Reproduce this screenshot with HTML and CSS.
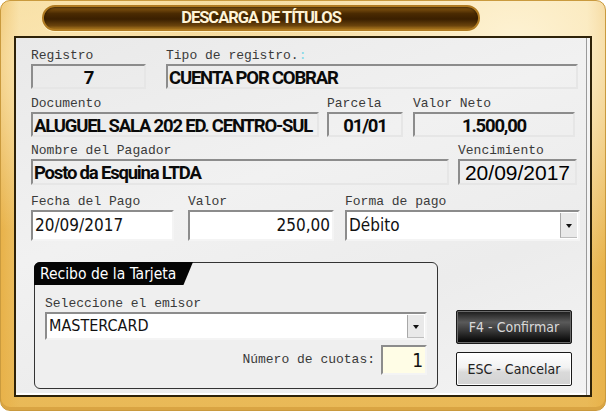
FILE: index.html
```html
<!doctype html>
<html>

<head>
	<meta charset="utf-8" />
	<link rel="stylesheet" href="styles.css">
</head>

<body>

	<div class="window">

		<div class="title-bar">
			<div class="title-pill">DESCARGA DE TÍTULOS</div>
		</div>

		<div class="panel">

			<div class="row row-1">
				<div class="field">
					<label>Registro</label>
					<div class="box bold center">7</div>
				</div>
				<div class="field">
					<label>Tipo de registro.<span class="colon">:</span></label>
					<div class="box bold">CUENTA POR COBRAR</div>
				</div>
			</div>

			<div class="row row-2">
				<div class="field">
					<label>Documento</label>
					<div class="box bold">ALUGUEL SALA 202 ED. CENTRO-SUL</div>
				</div>
				<div class="field">
					<label>Parcela</label>
					<div class="box bold center">01/01</div>
				</div>
				<div class="field">
					<label>Valor Neto</label>
					<div class="box bold center">1.500,00</div>
				</div>
			</div>

			<div class="row row-3">
				<div class="field">
					<label>Nombre del Pagador</label>
					<div class="box bold">Posto da Esquina LTDA</div>
				</div>
				<div class="field">
					<label>Vencimiento</label>
					<div class="box date center">20/09/2017</div>
				</div>
			</div>

			<div class="row row-4">
				<div class="field">
					<label>Fecha del Pago</label>
					<div class="input">20/09/2017</div>
				</div>
				<div class="field">
					<label>Valor</label>
					<div class="input right">250,00</div>
				</div>
				<div class="field">
					<label>Forma de pago</label>
					<div class="input select">
						<span>Débito</span>
						<span class="drop"></span>
					</div>
				</div>
			</div>

			<div class="bottom">

				<div class="group">
					<div class="group-tab">Recibo de la Tarjeta</div>
					<div class="group-body">
						<label>Seleccione el emisor</label>
						<div class="input select emisor">
							<span>MASTERCARD</span>
							<span class="drop"></span>
						</div>
						<div class="cuotas">
							<label>Número de cuotas:</label>
							<div class="input cuotas-input right">1</div>
						</div>
					</div>
				</div>

				<div class="buttons">
					<button class="btn btn-dark">F4 - Confirmar</button>
					<button class="btn btn-light">ESC - Cancelar</button>
				</div>

			</div>

		</div>

	</div>

</body>

</html>
```

FILE: styles.css
```css
* {
	box-sizing: border-box;
}

body {
	margin: 0;
	width: 606px;
	height: 411px;
	overflow: hidden;
	background: #ffffff;
}

.window {
	width: 606px;
	height: 411px;
	padding: 0 13px 13px 13px;
	border: 1px solid #c99a3e;
	border-radius: 10px;
	background:
		radial-gradient(ellipse at 85% 10%, rgba(255, 246, 220, 0.9), rgba(255, 246, 220, 0) 45%),
		radial-gradient(ellipse at 10% 15%, rgba(255, 240, 200, 0.7), rgba(255, 240, 200, 0) 35%),
		linear-gradient(90deg, #e8b24a, rgba(232, 178, 74, 0) 3%, rgba(232, 178, 74, 0) 97%, #e8b24a),
		linear-gradient(180deg, #f4d690, #eec46c 45%, #e9b957);
	box-shadow: inset 0 -3px 0 #d9a443;
	display: flex;
	flex-direction: column;
}

/* title */

.title-bar {
	height: 35px;
	padding: 4px 112px 0 28px;
}

.title-pill {
	height: 26px;
	border-radius: 13px;
	border: 2px solid #b07b22;
	background: linear-gradient(180deg, #8a5a12, #4a2a02 30%, #3a1f00 55%, #6a430c 85%, #a8741c);
	box-shadow: 0 1px 0 #fff2c8, inset 0 1px 2px rgba(0, 0, 0, 0.5);
	color: #fff3d6;
	font-family: Roboto, "Liberation Sans", sans-serif;
	font-weight: bold;
	font-size: 16.5px;
	letter-spacing: -1px;
	line-height: 22px;
	text-align: center;
}

/* panel */

.panel {
	flex: 1;
	border: 2px solid #2e2208;
	box-shadow: inset -3px 0 0 #f4f4f4, inset -4px 0 0 #9a9a9a, inset 0 -2px 0 #ffffff;
	background: linear-gradient(160deg, #e9e9e9, #f1f1f1 40%, #ececec 70%, #f3f3f3);
	padding: 11px 13px 0 15px;
}

label {
	display: block;
	font-family: "Liberation Mono", "Courier New", monospace;
	font-size: 13px;
	line-height: 14px;
	color: #3a3a3a;
	margin-bottom: 1px;
	white-space: nowrap;
}

.colon {
	color: #7fd8e8;
}

.row {
	display: grid;
}

.row-1 {
	grid-template-columns: 115px 412px;
	column-gap: 20px;
}

.row-2 {
	margin-top: 8px;
	grid-template-columns: 288px 76px 164px;
	column-gap: 8px;
}

.row-2 .field:last-child {
	margin-left: 2px;
}

.row-3 {
	margin-top: 7px;
	grid-template-columns: 418px 119px;
	column-gap: 9px;
}

.row-4 {
	margin-top: 10px;
	grid-template-columns: 143px 146px 232px;
	column-gap: 14px;
}

.row-4 .field:last-child {
	margin-left: -3px;
}

.box {
	height: 25px;
	border: 2px solid;
	border-color: #8c8c8c #e6e6e6 #e6e6e6 #8c8c8c;
	padding: 0 1px;
	color: #0a0a0a;
	white-space: nowrap;
	overflow: hidden;
}

.row-3 .box {
	height: 26px;
}

.bold {
	font-family: Roboto, "Liberation Sans", sans-serif;
	font-weight: bold;
	font-size: 18.5px;
	letter-spacing: -1.2px;
	line-height: 24px;
}

.date {
	font-family: "Liberation Sans", Arial, sans-serif;
	font-size: 21px;
	line-height: 23px;
	color: #000000;
}

.center {
	text-align: center;
}

.right {
	text-align: right;
}

.input {
	height: 31px;
	background: #ffffff;
	border: 2px solid;
	border-color: #8c8c8c #f4f4f4 #f4f4f4 #8c8c8c;
	padding: 0 2px;
	font-family: "DejaVu Sans Condensed", "DejaVu Sans", sans-serif;
	font-size: 17px;
	line-height: 27px;
	color: #111111;
	white-space: nowrap;
}

.select {
	display: flex;
	justify-content: space-between;
	padding-right: 0;
}

.drop {
	width: 17px;
	height: 25px;
	margin-top: 1px;
	margin-right: 1px;
	background: #e9e9e9;
	border-left: 1px solid #a8a8a8;
	border-bottom: 1px solid #bdbdbd;
	position: relative;
}

.drop::after {
	content: "";
	position: absolute;
	left: 5px;
	top: 11px;
	border-left: 3px solid transparent;
	border-right: 3px solid transparent;
	border-top: 4px solid #111111;
}

/* bottom area */

.bottom {
	margin-top: 21px;
	display: flex;
	align-items: flex-start;
}

.group {
	margin-left: 3px;
	width: 404px;
	height: 127px;
	border: 1px solid #333333;
	border-radius: 6px;
	background: #efefef;
}

.group-tab {
	width: 159px;
	height: 23px;
	margin: -1px 0 0 -1px;
	padding-left: 6px;
	background: #050505;
	color: #ffffff;
	border-top-left-radius: 6px;
	clip-path: polygon(0 0, 100% 0, 94% 100%, 0 100%);
	font-family: "DejaVu Sans Condensed", "DejaVu Sans", sans-serif;
	font-size: 15.5px;
	line-height: 24px;
}

.group-body {
	padding: 12px 10px 0 10px;
}

.emisor {
	height: 28px;
	font-size: 16px;
	line-height: 24px;
}

.emisor .drop {
	height: 23px;
	margin-top: 1px;
}

.emisor .drop::after {
	top: 10px;
}

.cuotas {
	margin-top: 5px;
	display: flex;
	justify-content: flex-end;
	align-items: center;
	gap: 6px;
}

.cuotas label {
	margin: 0;
}

.cuotas-input {
	width: 46px;
	height: 30px;
	background: #fffde6;
	font-size: 19px;
	line-height: 26px;
}

.buttons {
	margin-left: 18px;
	margin-top: 48px;
	display: flex;
	flex-direction: column;
	gap: 8px;
}

.btn {
	width: 116px;
	height: 34px;
	border: 1px solid #1a1a1a;
	border-radius: 2px;
	font-family: "DejaVu Sans Condensed", "DejaVu Sans", sans-serif;
	font-size: 14px;
	padding: 0;
}

.btn-dark {
	background: linear-gradient(180deg, #1a1a1a, #5a5a5a 35%, #3a3a3a 60%, #000000);
	color: #d9d9d9;
	box-shadow: inset 0 0 0 1px #6a6a6a;
}

.btn-light {
	background: linear-gradient(180deg, #ffffff, #f2f2f2 45%, #dadada 60%, #d2d2d2);
	color: #222222;
	box-shadow: inset 0 0 0 1px #ffffff;
}
```
